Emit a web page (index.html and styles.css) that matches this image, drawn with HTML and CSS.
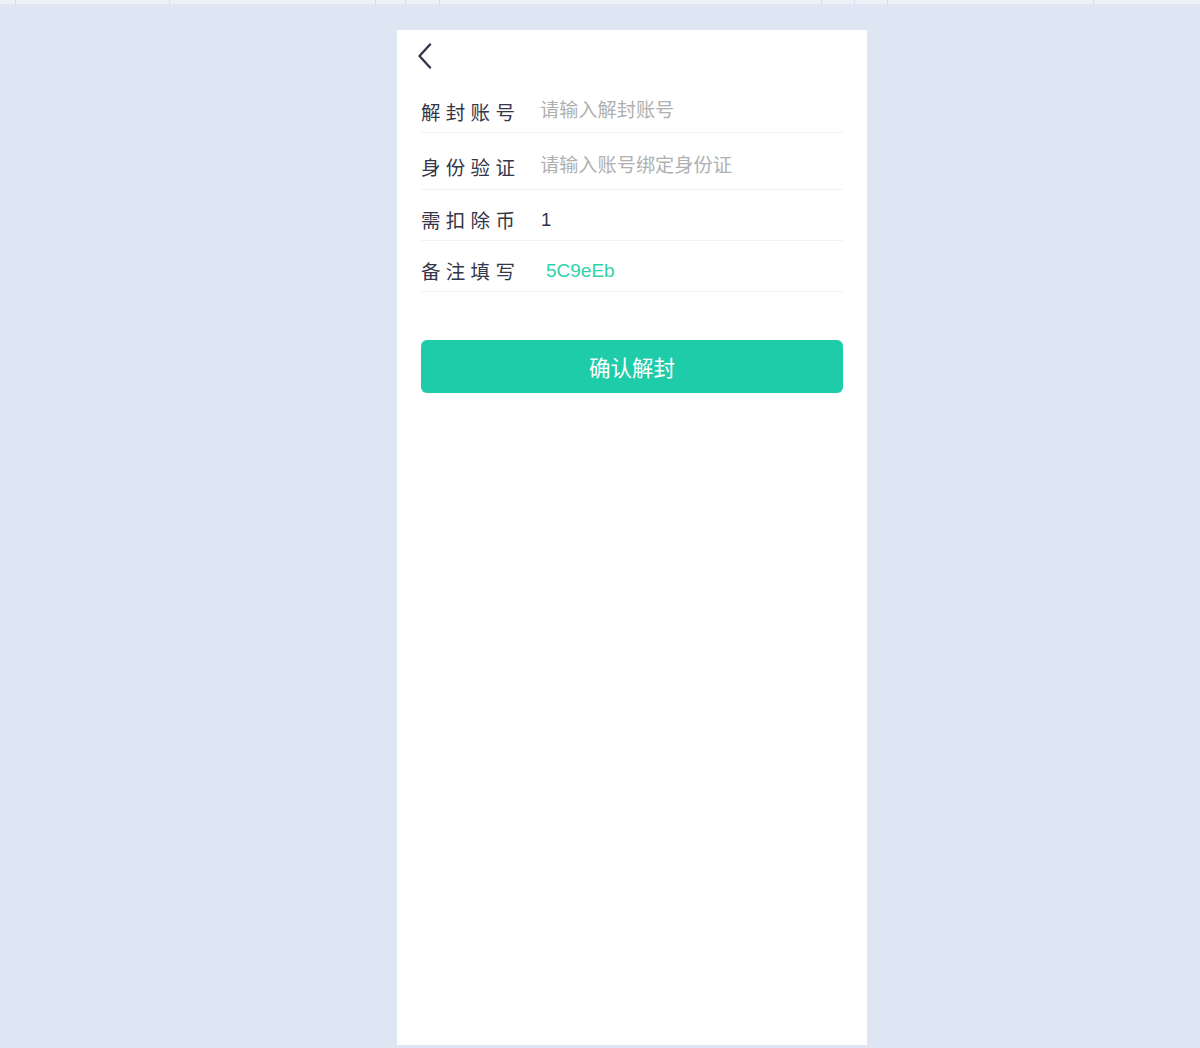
FILE: index.html
```html
<!DOCTYPE html>
<html lang="zh-CN">
<head>
  <meta charset="UTF-8" /><meta name="viewport" content="width=device-width,initial-scale=1" />
  <title>解封账号</title>
  <link rel="stylesheet" href="styles.css">
</head>
<body>

  <!-- Top strip -->
  <div class="topstrip">
    <span style="width:16px"></span><span style="width:154px"></span><span style="width:206px"></span>
    <span style="width:30px"></span><span style="width:34px"></span><span style="width:382px"></span>
    <span style="width:33px"></span><span style="width:33px"></span><span style="width:206px"></span>
    <span></span>
  </div>

  <div class="card">
    <div class="header">
      <svg class="back" width="16" height="26" viewBox="0 0 16 26">
        <polyline points="13,1.5 2.5,13 13,24.5" fill="none" stroke="#33354a" stroke-width="2.4" stroke-linecap="round" stroke-linejoin="round"/>
      </svg>
    </div>

    <div class="form">
      <div class="row">
        <label>解封账号</label>
        <input type="text" placeholder="请输入解封账号" />
      </div>
      <div class="row tall">
        <label>身份验证</label>
        <input type="text" placeholder="请输入账号绑定身份证" />
      </div>
      <div class="row">
        <label>需扣除币</label>
        <span class="value">1</span>
      </div>
      <div class="row">
        <label>备注填写</label>
        <span class="value code">5C9eEb</span>
      </div>
    </div>

    <button class="confirm">确认解封</button>
  </div>

</body>
</html>
```

FILE: styles.css
```css
/* Reset & fonts */
*, *::before, *::after { margin:0; padding:0; box-sizing:border-box; }
body {
  font-family: "Noto Sans CJK SC", "Noto Sans", sans-serif;
  background:#DFE6F3; color:#3a3b4c; height:1048px; overflow:hidden;
}

/* Top strip */
.topstrip { height:4px; display:flex; background:#EDF1F8; }
.topstrip span { height:4px; border-right:1px solid #d3dcec; }
.topstrip span:last-child { flex:1; border:none; }

/* Card */
.card {
  width:470px; height:1015px; margin:26px 0 0 397px;
  background:#fff; padding:0 24px;
}
.header { height:52px; display:flex; align-items:flex-start; padding-top:13px; }
.back { margin-left:-4px; }

/* Form rows */
.row {
  height:51px; display:flex; align-items:flex-end; padding-bottom:9px;
  border-bottom:1px solid #f1f2f5;
}
.row.tall { height:57px; padding-bottom:11px; }
.row label {
  width:119px; font-size:19.5px; line-height:22px; letter-spacing:5.3px;
  color:#35364a; flex-shrink:0;
}
.row input {
  flex:1; border:none; outline:none; background:transparent;
  font-family:inherit; font-size:19.2px; line-height:24px; height:24px; color:#333;
  margin-bottom:2px;
}
.row input::placeholder { color:#b0b0b0; }
.value {
  font-family:"Liberation Sans", Arial, sans-serif; font-size:18.5px; line-height:22px;
  color:#33344a; padding-left:1px;
}
.value.code { color:#2fd3a9; font-size:19px; padding-left:6px; }

/* Button */
.confirm {
  width:100%; height:53px; margin-top:48px; border:none; border-radius:6px;
  background:#1fcca9; color:#fff; font-family:inherit; font-size:21.5px;
  cursor:pointer;
}
```
